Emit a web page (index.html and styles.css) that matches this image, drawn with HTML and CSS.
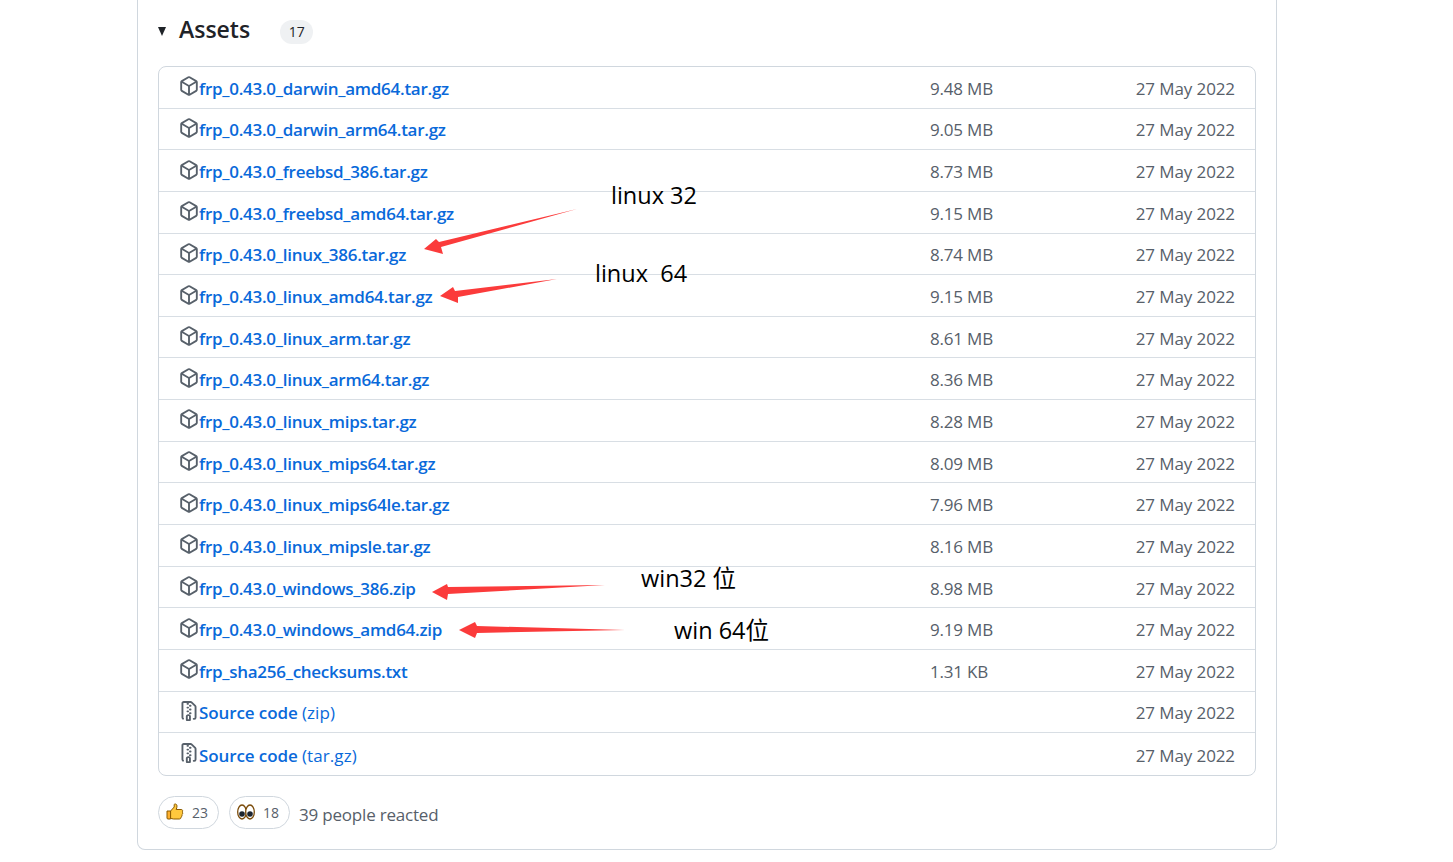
FILE: index.html
```html
<!DOCTYPE html>
<html lang="en">

<head>
    <meta charset="UTF-8">
    <meta name="viewport" content="width=device-width, initial-scale=1.0">
    <title>Assets</title>
    <link rel="stylesheet" href="styles.css">
</head>

<body>
    <svg width="0" height="0" class="defs">
        <symbol id="pkg" viewBox="0 0 16 16">
            <path d="m8.878.392 5.25 3.045c.54.314.872.89.872 1.514v6.098a1.75 1.75 0 0 1-.872 1.514l-5.25 3.045a1.75 1.75 0 0 1-1.756 0l-5.25-3.045A1.75 1.75 0 0 1 1 11.049V4.951c0-.624.332-1.201.872-1.514L7.122.392a1.75 1.75 0 0 1 1.756 0ZM7.875 1.69l-4.63 2.685L8 7.133l4.755-2.758-4.63-2.685a.248.248 0 0 0-.25 0ZM2.5 5.677v5.372c0 .09.047.171.125.216l4.625 2.683V8.432Zm6.25 8.271 4.625-2.683a.25.25 0 0 0 .125-.216V5.677L8.75 8.432Z"/>
        </symbol>
        <symbol id="zip" viewBox="0 0 16 16">
            <path d="M3.5 1.75v11.5c0 .09.048.173.126.217a.75.75 0 0 1-.752 1.298A1.748 1.748 0 0 1 2 13.25V1.75C2 .784 2.784 0 3.75 0h5.586c.464 0 .909.185 1.237.513l2.914 2.914c.329.328.513.773.513 1.237v8.586A1.75 1.75 0 0 1 12.25 15h-.5a.75.75 0 0 1 0-1.5h.5a.25.25 0 0 0 .25-.25V4.664a.25.25 0 0 0-.073-.177L9.513 1.573a.25.25 0 0 0-.177-.073H7.25a.75.75 0 0 1 0 1.5h-.5a.75.75 0 0 1 0-1.5h-3a.25.25 0 0 0-.25.25Zm3.75 8.75h.5c.966 0 1.75.784 1.75 1.75v3a.75.75 0 0 1-.75.75h-2.5a.75.75 0 0 1-.75-.75v-3c0-.966.784-1.75 1.75-1.75ZM6 5.25a.75.75 0 0 1 .75-.75h.5a.75.75 0 0 1 0 1.5h-.5A.75.75 0 0 1 6 5.25Zm.75 2.25h.5a.75.75 0 0 1 0 1.5h-.5a.75.75 0 0 1 0-1.5ZM8 6.75A.75.75 0 0 1 8.75 6h.5a.75.75 0 0 1 0 1.5h-.5A.75.75 0 0 1 8 6.75ZM8.75 3h.5a.75.75 0 0 1 0 1.5h-.5a.75.75 0 0 1 0-1.5ZM8 9.75A.75.75 0 0 1 8.75 9h.5a.75.75 0 0 1 0 1.5h-.5A.75.75 0 0 1 8 9.75Zm-1 2.5v2.25h1v-2.25a.25.25 0 0 0-.25-.25h-.5a.25.25 0 0 0-.25.25Z"/>
        </symbol>
    </svg>

    <div class="release-card">
        <div class="assets-head">
            <span class="caret"></span>
            <h3>Assets</h3>
            <span class="counter">17</span>
        </div>

        <ul class="asset-list">
            <li><svg class="icon"><use href="#pkg"/></svg><a href="#">frp_0.43.0_darwin_amd64.tar.gz</a><span class="size">9.48 MB</span><span class="date">27 May 2022</span></li>
            <li><svg class="icon"><use href="#pkg"/></svg><a href="#">frp_0.43.0_darwin_arm64.tar.gz</a><span class="size">9.05 MB</span><span class="date">27 May 2022</span></li>
            <li><svg class="icon"><use href="#pkg"/></svg><a href="#">frp_0.43.0_freebsd_386.tar.gz</a><span class="size">8.73 MB</span><span class="date">27 May 2022</span></li>
            <li><svg class="icon"><use href="#pkg"/></svg><a href="#">frp_0.43.0_freebsd_amd64.tar.gz</a><span class="size">9.15 MB</span><span class="date">27 May 2022</span></li>
            <li><svg class="icon"><use href="#pkg"/></svg><a href="#">frp_0.43.0_linux_386.tar.gz</a><span class="size">8.74 MB</span><span class="date">27 May 2022</span></li>
            <li><svg class="icon"><use href="#pkg"/></svg><a href="#">frp_0.43.0_linux_amd64.tar.gz</a><span class="size">9.15 MB</span><span class="date">27 May 2022</span></li>
            <li><svg class="icon"><use href="#pkg"/></svg><a href="#">frp_0.43.0_linux_arm.tar.gz</a><span class="size">8.61 MB</span><span class="date">27 May 2022</span></li>
            <li><svg class="icon"><use href="#pkg"/></svg><a href="#">frp_0.43.0_linux_arm64.tar.gz</a><span class="size">8.36 MB</span><span class="date">27 May 2022</span></li>
            <li><svg class="icon"><use href="#pkg"/></svg><a href="#">frp_0.43.0_linux_mips.tar.gz</a><span class="size">8.28 MB</span><span class="date">27 May 2022</span></li>
            <li><svg class="icon"><use href="#pkg"/></svg><a href="#">frp_0.43.0_linux_mips64.tar.gz</a><span class="size">8.09 MB</span><span class="date">27 May 2022</span></li>
            <li><svg class="icon"><use href="#pkg"/></svg><a href="#">frp_0.43.0_linux_mips64le.tar.gz</a><span class="size">7.96 MB</span><span class="date">27 May 2022</span></li>
            <li><svg class="icon"><use href="#pkg"/></svg><a href="#">frp_0.43.0_linux_mipsle.tar.gz</a><span class="size">8.16 MB</span><span class="date">27 May 2022</span></li>
            <li><svg class="icon"><use href="#pkg"/></svg><a href="#">frp_0.43.0_windows_386.zip</a><span class="size">8.98 MB</span><span class="date">27 May 2022</span></li>
            <li><svg class="icon"><use href="#pkg"/></svg><a href="#">frp_0.43.0_windows_amd64.zip</a><span class="size">9.19 MB</span><span class="date">27 May 2022</span></li>
            <li><svg class="icon"><use href="#pkg"/></svg><a href="#">frp_sha256_checksums.txt</a><span class="size">1.31 KB</span><span class="date">27 May 2022</span></li>
            <li><svg class="icon"><use href="#zip"/></svg><a href="#" class="source">Source code <span class="ext">(zip)</span></a><span class="size"></span><span class="date">27 May 2022</span></li>
            <li><svg class="icon"><use href="#zip"/></svg><a href="#" class="source">Source code <span class="ext">(tar.gz)</span></a><span class="size"></span><span class="date">27 May 2022</span></li>
        </ul>

        <div class="reactions">
            <span class="pill">
                <svg class="emoji" viewBox="0 0 18 18">
                    <path d="M1 8h3.6v8H2a1 1 0 0 1-1-1Z" fill="#ffb02e" stroke="#8a5a00" stroke-width="1"/>
                    <path d="M4.6 8 8.2 4V1.6c0-1 2.6-1 2.8 1.2.1 1.400-.5 2.700-.8 3.700h5c1.600 0 1.800 1.700 1 2.500.8.800.6 2.200-.3 2.700.4 1-.1 2-.9 2.300.2 1.100-.5 2-1.600 2H7.500c-1.200 0-2-.6-2.900-.6Z" fill="#ffc83d" stroke="#8a5a00" stroke-width="1"/>
                </svg>
                <span>23</span>
            </span>
            <span class="pill">
                <svg class="emoji" viewBox="0 0 18 18">
                    <ellipse cx="5" cy="9" rx="4.300" ry="7" fill="#fff" stroke="#7a4a08" stroke-width="1.300"/>
                    <ellipse cx="13" cy="9" rx="4.300" ry="7" fill="#fff" stroke="#7a4a08" stroke-width="1.300"/>
                    <circle cx="5" cy="11" r="2.800" fill="#1c2530"/>
                    <circle cx="13" cy="11" r="2.800" fill="#1c2530"/>
                </svg>
                <span>18</span>
            </span>
            <span class="reacted">39 people reacted</span>
        </div>
    </div>

    <!-- hand drawn notes on top of the list -->
    <svg class="arrows" width="1453" height="862">
        <polygon points="424,249 436,239 439,242 577,209 441,247 443,254"/>
        <polygon points="440,296 453,287 455,291 557,279 458,297 458,303"/>
        <polygon points="432,592 447,584 448,587 605,585 448,594 447,600"/>
        <polygon points="459,630 475,622 477,626 625,630 477,633 475,638"/>
    </svg>
    <span class="note note-l32">linux 32</span>
    <span class="note note-l64">linux&nbsp; 64</span>
    <span class="note note-w32">win32 位</span>
    <span class="note note-w64">win 64位</span>
</body>

</html>
```

FILE: styles.css
```css
* {
    box-sizing: border-box;
}

body {
    margin: 0;
    font-family: "Open Sans", "Noto Sans CJK SC", sans-serif;
    background-color: #fff;
    color: #1f2328;
    position: relative;
    height: 862px;
    overflow: hidden;
}

.defs {
    position: absolute;
}

.release-card {
    width: 1140px;
    height: 850px;
    margin-left: 137px;
    padding: 0 20px;
    border: 1px solid #d0d7de;
    border-top: none;
    border-radius: 0 0 8px 8px;
}

.assets-head {
    display: flex;
    align-items: center;
    height: 66px;
    padding-bottom: 8px;
}

.caret {
    width: 0;
    height: 0;
    border-left: 4.5px solid transparent;
    border-right: 4.5px solid transparent;
    border-top: 9px solid #1f2328;
    margin-top: 4px;
}

h3 {
    margin: 0 0 0 13px;
    font-size: 23px;
    font-weight: 600;
}

.counter {
    margin-left: 30px;
    margin-top: 6px;
    width: 33px;
    height: 24px;
    line-height: 24px;
    text-align: center;
    font-size: 14px;
    background-color: #eff1f3;
    border-radius: 12px;
}

.asset-list {
    list-style-type: none;
    margin: 0;
    padding: 0;
    border: 1px solid #d0d7de;
    border-radius: 8px;
}

.asset-list li {
    display: flex;
    align-items: center;
    height: 41.65px;
    padding: 2px 20px 0;
    border-bottom: 1px solid #d8dee4;
    font-size: 17px;
}

.asset-list li:last-child {
    border-bottom: none;
}

.icon {
    width: 20px;
    height: 20px;
    fill: #57606a;
    flex: none;
    margin-top: -4px;
}

.asset-list a {
    color: #0969da;
    font-weight: 600;
    letter-spacing: -0.27px;
    text-decoration: none;
    flex: 1;
}

.asset-list a.source {
    letter-spacing: -0.1px;
}

.ext {
    font-weight: 400;
    letter-spacing: 0.1px;
}

.size {
    width: 205px;
    color: #57606a;
    letter-spacing: -0.2px;
}

.date {
    width: 100px;
    text-align: right;
    white-space: nowrap;
    color: #57606a;
    letter-spacing: -0.1px;
}

.reactions {
    display: flex;
    align-items: center;
    margin-top: 20px;
    gap: 10px;
}

.pill {
    display: flex;
    align-items: center;
    gap: 8px;
    height: 33px;
    padding: 0 10px 0 7px;
    border: 1px solid #d0d7de;
    border-radius: 17px;
    font-size: 14px;
    color: #57606a;
}

.emoji {
    width: 18px;
    height: 18px;
}

.reacted {
    font-size: 17px;
    letter-spacing: -0.2px;
    color: #57606a;
    margin-top: 5px;
    margin-left: -1px;
}

.arrows {
    position: absolute;
    left: 0;
    top: 0;
    fill: #fb3b3b;
}

.note {
    position: absolute;
    font-size: 23.5px;
    line-height: 32px;
    color: #000;
    white-space: nowrap;
}

.note-l32 {
    left: 611px;
    top: 179px;
}

.note-l64 {
    left: 595px;
    top: 257px;
}

.note-w32 {
    left: 641px;
    top: 562px;
}

.note-w64 {
    left: 674px;
    top: 614px;
}
```
